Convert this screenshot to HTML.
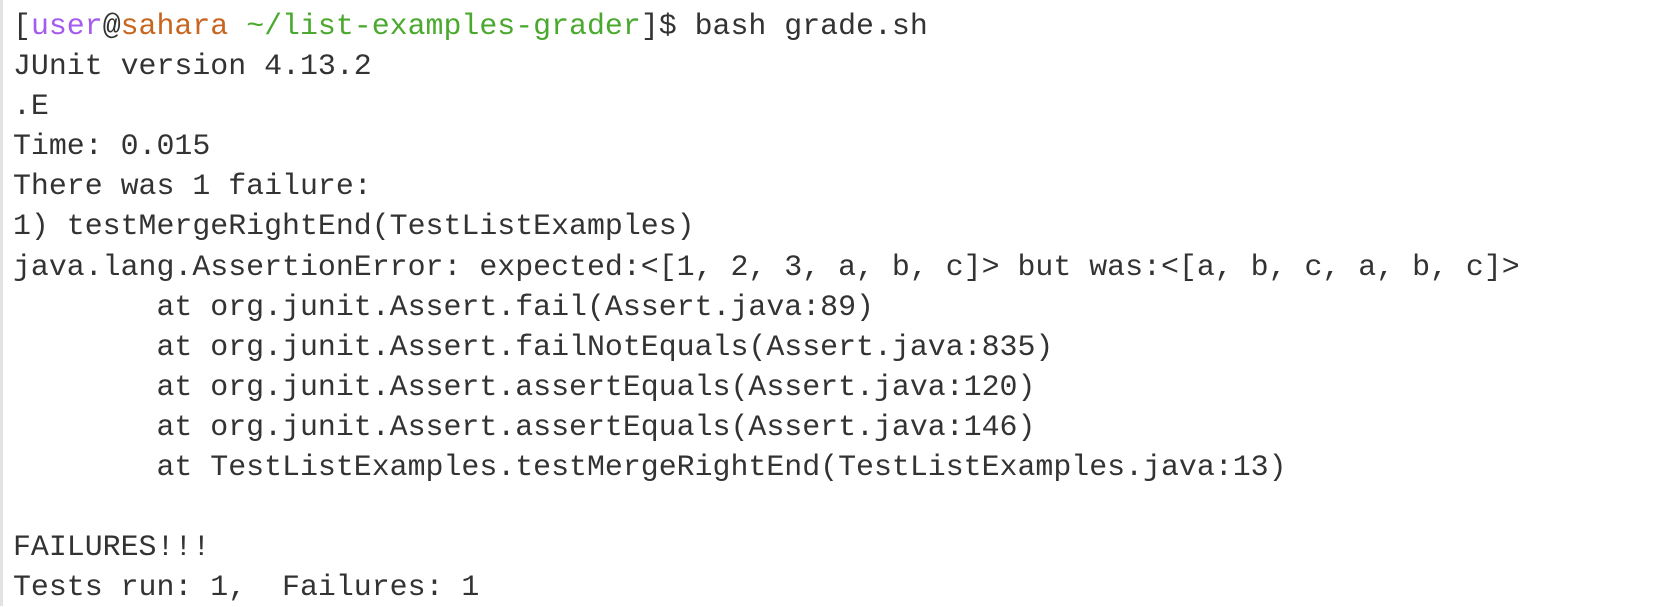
<!DOCTYPE html>
<html><head><meta charset="utf-8"><style>
html,body{margin:0;padding:0;background:#fff;}
body{width:1668px;height:606px;overflow:hidden;position:relative;}
.bar{position:absolute;left:0;top:0;width:3px;height:606px;background:#e2e2e2;}
pre{margin:0;position:absolute;left:13px;top:6px;font-family:"Liberation Mono",monospace;font-size:29.9px;line-height:40.1px;color:#333;tab-size:8;}
.p{color:#a55bf0}.o{color:#c8651f}.g{color:#4aa92e}
</style></head><body><div class="bar"></div><pre>[<span class="p">user</span>@<span class="o">sahara</span> <span class="g">~/list-examples-grader</span>]$ bash grade.sh
JUnit version 4.13.2
.E
Time: 0.015
There was 1 failure:
1) testMergeRightEnd(TestListExamples)
java.lang.AssertionError: expected:&lt;[1, 2, 3, a, b, c]&gt; but was:&lt;[a, b, c, a, b, c]&gt;
        at org.junit.Assert.fail(Assert.java:89)
        at org.junit.Assert.failNotEquals(Assert.java:835)
        at org.junit.Assert.assertEquals(Assert.java:120)
        at org.junit.Assert.assertEquals(Assert.java:146)
        at TestListExamples.testMergeRightEnd(TestListExamples.java:13)

FAILURES!!!
Tests run: 1,  Failures: 1</pre></body></html>
